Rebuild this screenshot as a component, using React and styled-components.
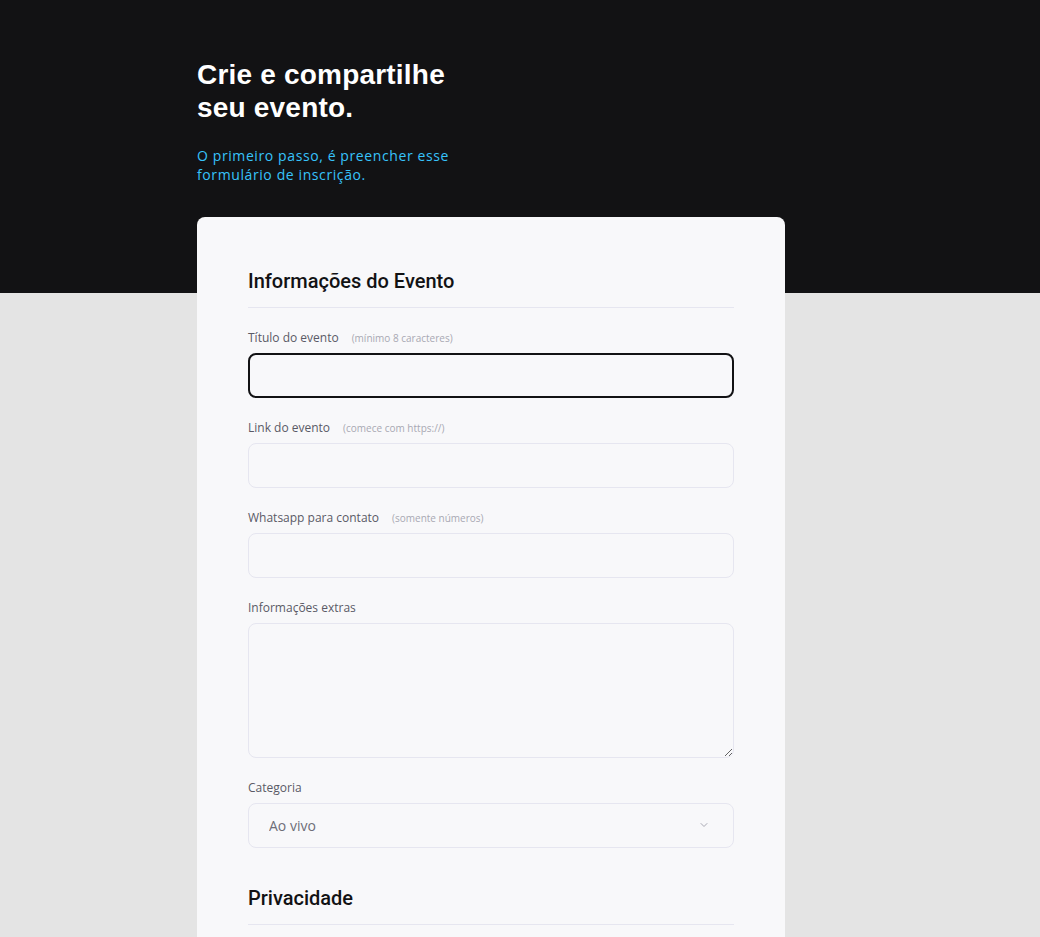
import React from 'react'
import styled, { createGlobalStyle } from 'styled-components'
import { ChevronDown } from 'lucide-react'

const GlobalStyle = createGlobalStyle`
  * {
    box-sizing: border-box;
  }

  body {
    margin: 0;
    background: #e4e4e4;
    font-family: 'Open Sans', 'Noto Sans', sans-serif;
    -webkit-font-smoothing: antialiased;
  }
`

const Page = styled.main`
  min-height: 937px;
  background: linear-gradient(to bottom, #121214 0, #121214 293px, #e4e4e4 293px);
`

const Container = styled.div`
  width: 646px;
  margin: 0 auto;
  padding-top: 58px;
`

const Hero = styled.header`
  margin-bottom: 33px;
`

const Title = styled.h1`
  width: 270px;
  margin: 0 0 22px;
  font-family: 'Liberation Sans', Arial, sans-serif;
  font-size: 28px;
  font-weight: 700;
  line-height: 33px;
  letter-spacing: 0.2px;
  color: #ffffff;
`

const Subtitle = styled.p`
  width: 290px;
  margin: 0;
  font-size: 14px;
  line-height: 19px;
  letter-spacing: 0.6px;
  color: #37c3fb;
`

const Card = styled.form`
  width: 588px;
  padding: 52px 51px 40px;
  background: #f8f8fa;
  border-radius: 8px;
`

const Fieldset = styled.fieldset`
  margin: 0 0 38px;
  padding: 0;
  border: 0;
`

const Legend = styled.legend`
  width: 100%;
  margin: 0;
  padding: 0 0 14px;
  border-bottom: 1px solid #e6e6f0;
  font-family: Roboto, 'Liberation Sans', sans-serif;
  font-size: 20px;
  font-weight: 500;
  line-height: 24px;
  color: #121214;
`

const FieldList = styled.div`
  display: flex;
  flex-direction: column;
  gap: 21px;
  padding-top: 21px;
`

const Field = styled.div`
  display: flex;
  flex-direction: column;
  gap: 6px;
`

const Label = styled.label`
  display: flex;
  align-items: baseline;
  gap: 13px;
  font-size: 12px;
  line-height: 18px;
  color: #5a5a66;
`

const Hint = styled.span`
  font-size: 10px;
  color: #a8a8b3;
`

const Input = styled.input`
  width: 100%;
  height: 45px;
  padding: 0 20px;
  background: #f8f8fa;
  border: 1px solid #e6e6f0;
  border-radius: 8px;
  font: inherit;
  font-size: 14px;
  color: #121214;
  outline: none;

  ${props => props.$focused && `
    border: 2px solid #121214;
  `}
`

const TextArea = styled.textarea`
  width: 100%;
  height: 135px;
  padding: 14px 20px;
  background: #f8f8fa;
  border: 1px solid #e6e6f0;
  border-radius: 8px;
  font: inherit;
  font-size: 14px;
  color: #121214;
  resize: vertical;
  outline: none;
  display: block;
`

const SelectWrap = styled.div`
  position: relative;
  width: 100%;
`

const Select = styled.select`
  width: 100%;
  height: 45px;
  padding: 0 20px;
  background: #f8f8fa;
  border: 1px solid #e6e6f0;
  border-radius: 8px;
  font: inherit;
  font-size: 14px;
  color: #6e6e78;
  appearance: none;
  outline: none;
`

const Chevron = styled(ChevronDown)`
  position: absolute;
  right: 24px;
  top: 16px;
  color: #a8a8b3;
  pointer-events: none;
`

export default function App() {
  return (
    <>
      <GlobalStyle />
      <Page>
        <Container>
          <Hero>
            <Title>Crie e compartilhe seu evento.</Title>
            <Subtitle>O primeiro passo, é preencher esse formulário de inscrição.</Subtitle>
          </Hero>

          <Card>
            <Fieldset>
              <Legend>Informações do Evento</Legend>
              <FieldList>
                <Field>
                  <Label htmlFor="title">
                    Título do evento <Hint>(mínimo 8 caracteres)</Hint>
                  </Label>
                  <Input id="title" $focused />
                </Field>
                <Field>
                  <Label htmlFor="link">
                    Link do evento <Hint>(comece com https://)</Hint>
                  </Label>
                  <Input id="link" />
                </Field>
                <Field>
                  <Label htmlFor="whatsapp">
                    Whatsapp para contato <Hint>(somente números)</Hint>
                  </Label>
                  <Input id="whatsapp" />
                </Field>
                <Field>
                  <Label htmlFor="extras">Informações extras</Label>
                  <TextArea id="extras" />
                </Field>
                <Field>
                  <Label htmlFor="category">Categoria</Label>
                  <SelectWrap>
                    <Select id="category" defaultValue="live">
                      <option value="live">Ao vivo</option>
                      <option value="online">Online</option>
                    </Select>
                    <Chevron size={12} strokeWidth={2} />
                  </SelectWrap>
                </Field>
              </FieldList>
            </Fieldset>

            <Fieldset>
              <Legend>Privacidade</Legend>
              <FieldList />
            </Fieldset>
          </Card>
        </Container>
      </Page>
    </>
  )
}
